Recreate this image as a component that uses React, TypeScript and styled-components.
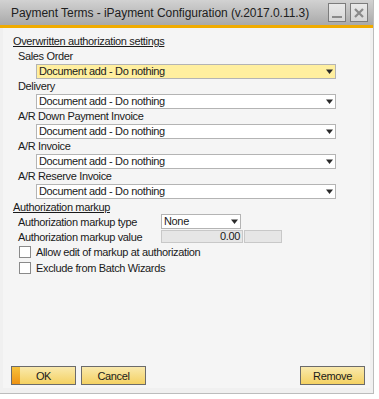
import React from "react";
import styled, { createGlobalStyle } from "styled-components";

const Global = createGlobalStyle`
  html, body { margin: 0; padding: 0; background: #ffffff; }
  body { font-family: "Liberation Sans", Arial, sans-serif; font-size: 11px; letter-spacing: -0.35px; color: #1a1a1a; }
  * { box-sizing: border-box; }
`;

const Window = styled.div`
  width: 374px;
  height: 394px;
  display: flex;
  flex-direction: column;
  background: #f0f0f0;
  border-right: 1px solid #bcbcbc;
  border-bottom: 1px solid #bcbcbc;
`;

const TitleBar = styled.div`
  height: 28px;
  flex: none;
  display: flex;
  align-items: center;
  padding: 0 5px 0 11px;
  background: linear-gradient(#d2d2d2, #a9a9a9);
  border-bottom: 3px solid #f0ab00;
`;

const Title = styled.div`
  flex: 1;
  font-size: 12px;
  letter-spacing: -0.05px;
  color: #202020;
  white-space: nowrap;
`;

const WinButtons = styled.div`
  display: flex;
  gap: 4px;
`;

const WinButton = styled.div`
  width: 18px;
  height: 19px;
  border: 1px solid #7c7c7c;
  background: linear-gradient(#e9e9e9, #d6d6d6);
  display: flex;
  align-items: center;
  justify-content: center;
`;

const Panel = styled.div`
  flex: 1;
  margin: 0 3px 5px 3px;
  background: #f5f5f5;
  display: flex;
  flex-direction: column;
  padding: 6px 0 3px 10px;
`;

const SectionHeader = styled.div<{ $gap?: number; $after?: number }>`
  height: 14px;
  line-height: 14px;
  text-decoration: underline;
  margin-top: ${(p) => p.$gap ?? 0}px;
  margin-bottom: ${(p) => p.$after ?? 1}px;
`;

const Label = styled.div`
  height: 15px;
  line-height: 15px;
  padding-left: 5px;
  white-space: nowrap;
`;

const SelectBox = styled.div<{ $width: number; $active?: boolean }>`
  width: ${(p) => p.$width}px;
  height: 15px;
  border: 1px solid #b4b4b4;
  background: ${(p) => (p.$active ? "#ffef9f" : "#ffffff")};
  display: flex;
  align-items: center;
  padding: 0 1px 0 2px;
  line-height: 13px;
`;

const SelectText = styled.span`
  flex: 1;
  white-space: nowrap;
`;

const SelectRow = styled.div`
  padding-left: 23px;
`;

const FormRow = styled.div`
  display: grid;
  grid-template-columns: 143px auto;
  align-items: center;
  height: 15px;
  padding-left: 5px;
`;

const ValueGroup = styled.div`
  display: flex;
  gap: 1px;
`;

const ValueBox = styled.div<{ $width: number }>`
  width: ${(p) => p.$width}px;
  height: 13px;
  background: #e6e6e6;
  border: 1px solid #c8c8c8;
  text-align: right;
  padding-right: 2px;
  line-height: 11px;
`;

const CheckRow = styled.label`
  display: flex;
  align-items: center;
  gap: 5px;
  height: 16px;
  padding-left: 6px;
`;

const CheckBox = styled.span`
  width: 12px;
  height: 12px;
  border: 1px solid #8a8a8a;
  background: #ffffff;
`;

const Spacer = styled.div`
  flex: 1;
`;

const ButtonBar = styled.div`
  display: flex;
  align-items: center;
  gap: 5px;
  margin-left: -2px;
  padding-right: 5px;
`;

const Button = styled.div`
  width: 65px;
  height: 19px;
  border: 1px solid #6b6b6b;
  background: linear-gradient(#f9e9ad, #f4d162);
  display: flex;
  align-items: center;
  justify-content: center;
  position: relative;
  color: #1a1a1a;
`;

const Stripe = styled.span`
  position: absolute;
  left: 0;
  top: 0;
  bottom: 0;
  width: 8px;
  background: linear-gradient(#f6c23c, #ee9212);
`;

const Arrow = () => (
  <svg width="9" height="6" viewBox="0 0 9 6">
    <polygon points="1,0.5 8,0.5 4.5,5" fill="#2a2a2a" />
  </svg>
);

const Select = ({ text, width, active }: { text: string; width: number; active?: boolean }) => (
  <SelectBox $width={width} $active={active}>
    <SelectText>{text}</SelectText>
    <Arrow />
  </SelectBox>
);

const docs = ["Sales Order", "Delivery", "A/R Down Payment Invoice", "A/R Invoice", "A/R Reserve Invoice"];

export default function App() {
  return (
    <>
      <Global />
      <Window>
        <TitleBar>
          <Title>Payment Terms - iPayment Configuration (v.2017.0.11.3)</Title>
          <WinButtons>
            <WinButton>
              <svg width="12" height="12" viewBox="0 0 12 12">
                <rect x="1" y="9" width="10" height="2" fill="#8a8a8a" />
              </svg>
            </WinButton>
            <WinButton>
              <svg width="12" height="12" viewBox="0 0 12 12">
                <path d="M2 2 L10 10 M10 2 L2 10" stroke="#8a8a8a" strokeWidth="2.2" />
              </svg>
            </WinButton>
          </WinButtons>
        </TitleBar>
        <Panel>
          <SectionHeader>Overwritten authorization settings</SectionHeader>
          {docs.map((d, i) => (
            <React.Fragment key={d}>
              <Label>{d}</Label>
              <SelectRow>
                <Select text="Document add - Do nothing" width={300} active={i === 0} />
              </SelectRow>
            </React.Fragment>
          ))}
          <SectionHeader $gap={1} $after={0}>Authorization markup</SectionHeader>
          <FormRow>
            <span>Authorization markup type</span>
            <Select text="None" width={80} />
          </FormRow>
          <FormRow>
            <span>Authorization markup value</span>
            <ValueGroup>
              <ValueBox $width={82}>0.00</ValueBox>
              <ValueBox $width={38} />
            </ValueGroup>
          </FormRow>
          <CheckRow>
            <CheckBox />
            Allow edit of markup at authorization
          </CheckRow>
          <CheckRow>
            <CheckBox />
            Exclude from Batch Wizards
          </CheckRow>
          <Spacer />
          <ButtonBar>
            <Button>
              <Stripe />
              OK
            </Button>
            <Button>Cancel</Button>
            <Spacer />
            <Button>Remove</Button>
          </ButtonBar>
        </Panel>
      </Window>
    </>
  );
}
